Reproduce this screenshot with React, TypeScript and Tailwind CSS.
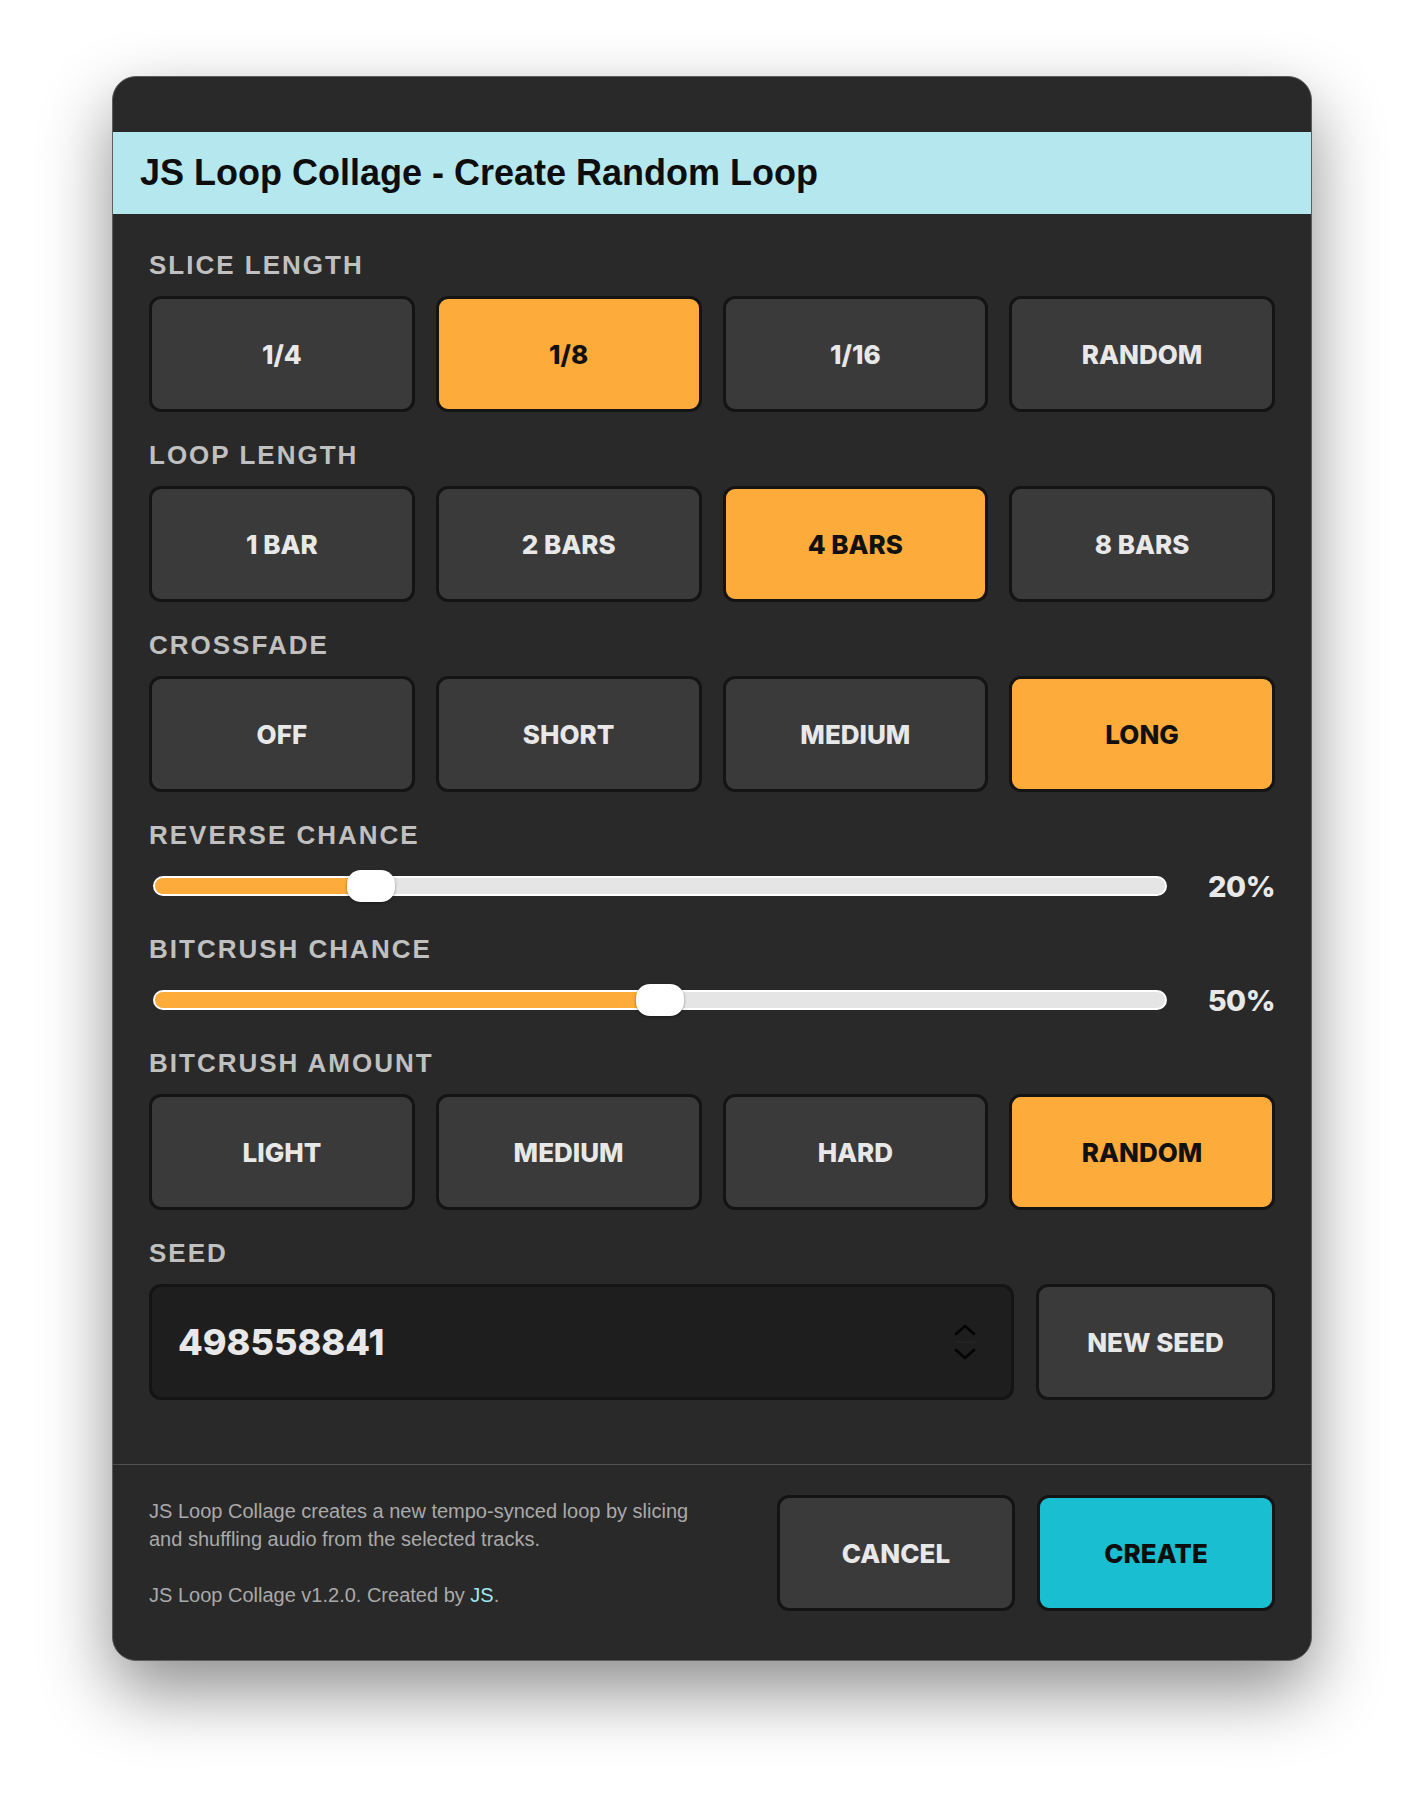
import { useState } from 'react';

const LABEL_FONT = { fontFamily: '"Liberation Sans", Arial, sans-serif' };

interface OptionRowProps {
  label: string;
  options: string[];
  selected: number;
  onSelect: (i: number) => void;
}

function SectionLabel({ children }: { children: React.ReactNode }) {
  return (
    <div
      className="text-[26px] leading-[26px] font-bold tracking-[2px] text-[#c0c0c0] mb-[18px]"
      style={LABEL_FONT}
    >
      {children}
    </div>
  );
}

function OptionRow({ label, options, selected, onSelect }: OptionRowProps) {
  return (
    <div>
      <SectionLabel>{label}</SectionLabel>
      <div className="grid grid-cols-4 gap-[21px]">
        {options.map((opt, i) => (
          <button
            key={opt}
            type="button"
            onClick={() => onSelect(i)}
            className={
              i === selected
                ? 'h-[116px] rounded-[12px] border-[3px] border-[#141414] bg-[#fdab3b] text-[26px] font-extrabold text-[#111]'
                : 'h-[116px] rounded-[12px] border-[3px] border-[#141414] bg-[#3a3a3a] text-[26px] font-extrabold text-[#e8e8e8]'
            }
          >
            {opt}
          </button>
        ))}
      </div>
    </div>
  );
}

function SliderRow({ label, value }: { label: string; value: number }) {
  const p = value / 100;
  return (
    <div>
      <SectionLabel>{label}</SectionLabel>
      <div className="flex items-center h-[40px]">
        <div className="relative flex-1 ml-[4px] h-[20px] rounded-full border-2 border-white bg-[#e5e5e5]">
          <div
            className="h-full rounded-full bg-[#fdab3b]"
            style={{ width: `calc(${p} * (100% - 48px) + 24px)` }}
          />
          <div
            className="absolute top-[-8px] h-[32px] w-[48px] rounded-[14px] bg-white shadow-[0_1px_3px_rgba(0,0,0,0.4)]"
            style={{ left: `calc(${p} * (100% - 48px))` }}
          />
        </div>
        <div className="w-[108px] text-right text-[29px] font-extrabold tracking-[-0.5px] text-[#e8e8e8] leading-none">
          {value}%
        </div>
      </div>
    </div>
  );
}

export default function App() {
  const [slice, setSlice] = useState(1);
  const [loop, setLoop] = useState(2);
  const [fade, setFade] = useState(3);
  const [amount, setAmount] = useState(3);

  return (
    <div
      className="min-h-[1810px] bg-white pt-[76px]"
      style={{ fontFamily: 'Inter, "Noto Sans", sans-serif' }}
    >
      <div className="mx-auto w-[1200px] overflow-hidden rounded-[24px] border border-[#5e5e5e] bg-[#292929] shadow-[0_30px_70px_rgba(0,0,0,0.45)]">
        <div className="h-[55px]" />
        <div className="flex h-[82px] items-center bg-[#b5e7ee] px-[27px]">
          <h1
            className="text-[36px] leading-none font-bold text-[#0d0d0d]"
            style={LABEL_FONT}
          >
            JS Loop Collage - Create Random Loop
          </h1>
        </div>

        <div className="flex flex-col gap-[30px] px-[36px] pt-[38px] pb-[64px]">
          <OptionRow
            label="SLICE LENGTH"
            options={['1/4', '1/8', '1/16', 'RANDOM']}
            selected={slice}
            onSelect={setSlice}
          />
          <OptionRow
            label="LOOP LENGTH"
            options={['1 BAR', '2 BARS', '4 BARS', '8 BARS']}
            selected={loop}
            onSelect={setLoop}
          />
          <OptionRow
            label="CROSSFADE"
            options={['OFF', 'SHORT', 'MEDIUM', 'LONG']}
            selected={fade}
            onSelect={setFade}
          />
          <SliderRow label="REVERSE CHANCE" value={20} />
          <SliderRow label="BITCRUSH CHANCE" value={50} />
          <OptionRow
            label="BITCRUSH AMOUNT"
            options={['LIGHT', 'MEDIUM', 'HARD', 'RANDOM']}
            selected={amount}
            onSelect={setAmount}
          />
          <div>
            <SectionLabel>SEED</SectionLabel>
            <div className="flex gap-[22px]">
              <div className="flex h-[116px] flex-1 items-center rounded-[12px] border-[3px] border-[#141414] bg-[#1e1e1e] pl-[26px] pr-[34px]">
                <span className="flex-1 text-[36px] font-extrabold text-[#e8e8e8]">498558841</span>
                <svg width="24" height="38" viewBox="0 0 24 38" fill="none" stroke="#050505" strokeWidth="2.6" strokeLinecap="round" strokeLinejoin="round">
                  <path d="M3 11 L12 3 L21 11" />
                  <path d="M3 19 L21 19" stroke="#262626" strokeWidth="1.5" />
                  <path d="M3 27 L12 35 L21 27" />
                </svg>
              </div>
              <button
                type="button"
                className="h-[116px] w-[239px] rounded-[12px] border-[3px] border-[#141414] bg-[#3a3a3a] text-[26px] font-extrabold text-[#e8e8e8]"
              >
                NEW SEED
              </button>
            </div>
          </div>
        </div>

        <div className="flex items-center gap-[22px] border-t border-[#505050] px-[36px] pt-[30px] pb-[49px]">
          <div
            className="flex-1 text-[20px] leading-[28px] text-[#a9a9a9]"
            style={LABEL_FONT}
          >
            <p className="max-w-[560px]">
              JS Loop Collage creates a new tempo-synced loop by slicing and shuffling audio from the selected tracks.
            </p>
            <p className="mt-[28px]">
              JS Loop Collage v1.2.0. Created by <span className="text-[#9fe6f0]">JS</span>.
            </p>
          </div>
          <button
            type="button"
            className="h-[116px] w-[238px] rounded-[12px] border-[3px] border-[#141414] bg-[#3a3a3a] text-[26px] font-extrabold text-[#e8e8e8]"
          >
            CANCEL
          </button>
          <button
            type="button"
            className="h-[116px] w-[238px] rounded-[12px] border-[3px] border-[#141414] bg-[#19bfd1] text-[26px] font-extrabold text-[#0d0d0d]"
          >
            CREATE
          </button>
        </div>
      </div>
    </div>
  );
}
